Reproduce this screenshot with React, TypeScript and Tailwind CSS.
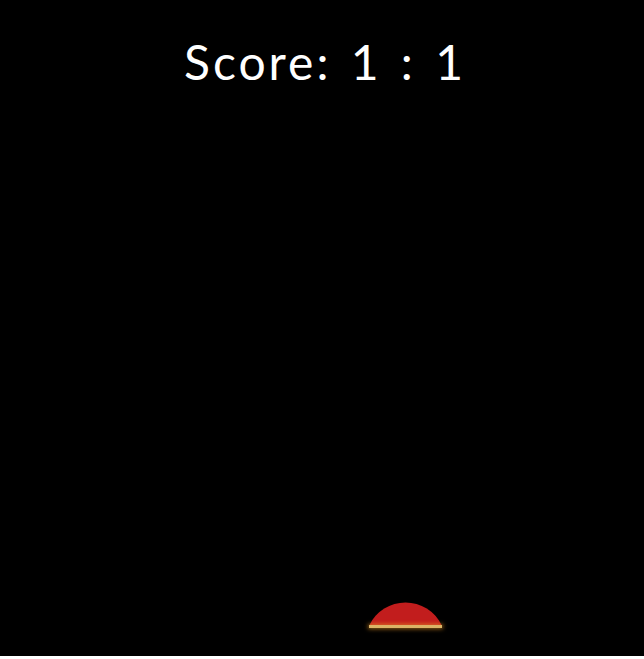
import React from 'react';

const App: React.FC = () => {
  const score = { left: 1, right: 1 };
  const paddleX = 369;

  return (
    <div className="w-full bg-white">
      <div className="relative h-[656px] w-full overflow-hidden bg-black">
        <div className="flex justify-center pt-[38px] pl-[6px]">
          <h1
            className="text-[48px] leading-none tracking-[3px] [word-spacing:4px] text-white"
            style={{ fontFamily: 'Lato, "Open Sans", sans-serif' }}
          >
            Score: {score.left} : {score.right}
          </h1>
        </div>

        {/* paddle */}
        <div className="absolute top-[601px] flex flex-col" style={{ left: paddleX }}>
          <svg width="73" height="24" viewBox="0 0 73 24" className="block">
            <path d="M0.5 24 A40 40 0 0 1 72.5 24 Z" fill="#c21d1d" />
          </svg>
          <div className="h-[3px] w-[73px] bg-[#dcb466] shadow-[0_0_4px_1px_rgba(230,150,40,0.65)]" />
        </div>
      </div>
    </div>
  );
};

export default App;
